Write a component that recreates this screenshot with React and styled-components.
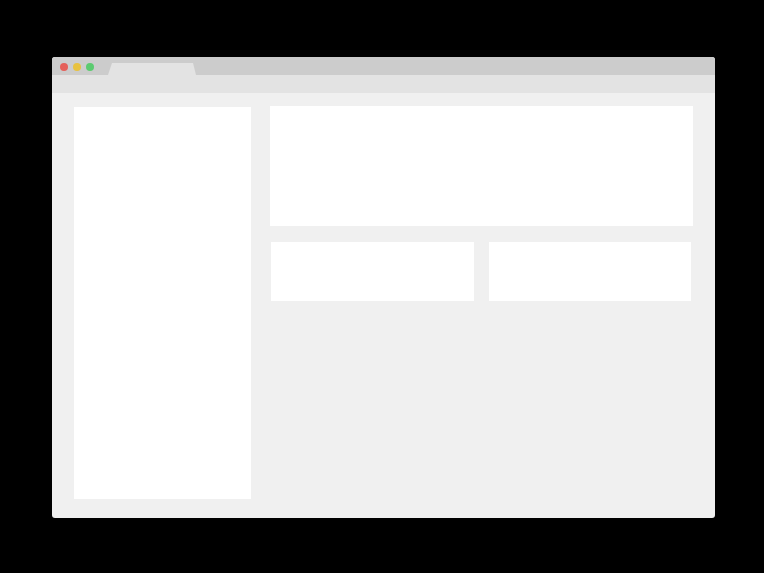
import React from 'react';
import styled, { createGlobalStyle } from 'styled-components';

const GlobalStyle = createGlobalStyle`
    html, body {
        margin: 0;
        padding: 0;
        background: #000;
        font-family: "Liberation Sans", Arial, sans-serif;
    }
`;

const Page = styled.div`
    width: 764px;
    height: 573px;
    padding: 57px 0 0 52px;
    box-sizing: border-box;
    background: #000;
`;

const Window = styled.div`
    width: 663px;
    height: 461px;
    border-radius: 3px;
    overflow: hidden;
    display: flex;
    flex-direction: column;
    background: #f0f0f0;
`;

const TitleBar = styled.div`
    height: 18px;
    background: #cccccc;
    display: flex;
    align-items: flex-end;
`;

const Dots = styled.div`
    display: flex;
    gap: 5px;
    padding: 6px 0 0 8px;
    align-self: flex-start;
`;

const Dot = styled.span`
    width: 8px;
    height: 8px;
    border-radius: 50%;
    background: ${(p) => p.color};
`;

const Tab = styled.div`
    margin-left: 14px;
    width: 88px;
    height: 12px;
    background: #e3e3e3;
    clip-path: polygon(4px 0, 85px 0, 88px 100%, 0 100%);
`;

const AddressBar = styled.div`
    height: 18px;
    background: #e3e3e3;
`;

const Content = styled.div`
    flex: 1;
    display: grid;
    grid-template-columns: 177px 1fr;
    gap: 19px;
    padding: 13px 22px 19px 22px;
`;

const Sidebar = styled.div`
    background: #fff;
    margin-top: 1px;
`;

const Main = styled.div`
    display: flex;
    flex-direction: column;
    gap: 16px;
`;

const Hero = styled.div`
    height: 120px;
    background: #fff;
`;

const CardRow = styled.div`
    display: grid;
    grid-template-columns: 1fr 1fr;
    gap: 15px;
    padding: 0 2px 0 1px;
`;

const Card = styled.div`
    height: 59px;
    background: #fff;
`;

export default function App() {
    return (
        <>
            <GlobalStyle />
            <Page>
                <Window>
                    <TitleBar>
                        <Dots>
                            <Dot color="#e5605a" />
                            <Dot color="#e8c23f" />
                            <Dot color="#5ccb70" />
                        </Dots>
                        <Tab />
                    </TitleBar>
                    <AddressBar />
                    <Content>
                        <Sidebar />
                        <Main>
                            <Hero />
                            <CardRow>
                                <Card />
                                <Card />
                            </CardRow>
                        </Main>
                    </Content>
                </Window>
            </Page>
        </>
    );
}
